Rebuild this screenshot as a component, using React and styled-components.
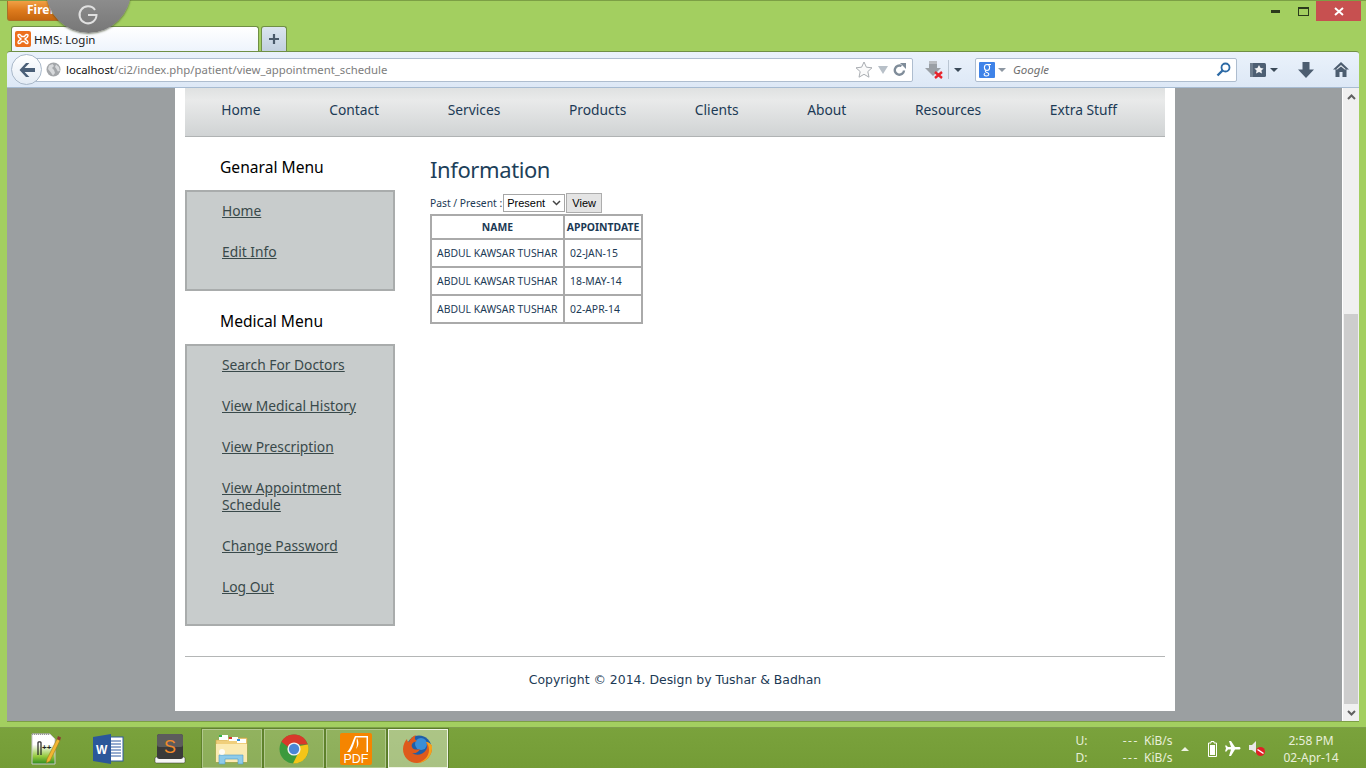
import React from "react";
import styled, { createGlobalStyle } from "styled-components";

const Global = createGlobalStyle`
  html, body { margin: 0; padding: 0; overflow: hidden; background: #a3cf60; }
  * { box-sizing: border-box; }
`;

const UI = `"Noto Sans", "Open Sans", sans-serif`;

const Screen = styled.div`
  position: relative; width: 1366px; height: 768px; overflow: hidden;
  display: flex; flex-direction: column; font-family: ${UI};
`;
const Win = styled.div`
  height: 727px; display: flex; flex-direction: column; background: #a3cf60;
  border-top: 1px solid #7c9f45; padding: 0 7px 5px 7px;
`;
const TitleRow = styled.div`
  height: 25px; flex: none; display: flex; justify-content: space-between; align-items: flex-start;
`;
const MenuButton = styled.div`
  width: 103px; height: 20px; padding-left: 19px; font: bold 12px/18px ${UI}; color: #fff;
  background: linear-gradient(#f0a045, #dd7a1c 50%, #c4650f); border: 1px solid #a8702a; border-top: 0;
  border-radius: 0 0 3px 3px;
`;
const WinControls = styled.div`display: flex; align-items: flex-start; margin-right: -2px;`;
const WinBtn = styled.div`
  width: ${p => p.$w}px; height: 20px; display: flex; align-items: center; justify-content: center;
  background: ${p => p.$bg || "transparent"};
`;
const TabRow = styled.div`
  height: 25px; flex: none; display: flex; padding-left: 4px; gap: 2px; align-items: flex-end;
`;
const Tab = styled.div`
  width: 248px; height: 25px; display: flex; align-items: center; gap: 3px; padding: 0 0 0 3px;
  background: linear-gradient(#fff, #eef4fc); border: 1px solid #6f8f45; border-bottom: 0;
  border-radius: 3px 3px 0 0; font-size: 11.5px; color: #1a1a1a;
`;
const NewTab = styled.div`
  width: 26px; height: 25px; display: flex; align-items: center; justify-content: center;
  background: linear-gradient(#dbe5ef, #c2d0df); border: 1px solid #6f8f45; border-bottom: 0;
  border-radius: 3px 3px 0 0;
`;
const Toolbar = styled.div`
  height: 37px; flex: none; display: flex; align-items: center; padding: 0 0 0 4px;
  background: linear-gradient(#eaf2fb, #dde8f6); border-top: 1px solid #6f8f45; border-bottom: 1px solid #a6bbd2;
  border-radius: 3px 3px 0 0;
`;
const BackButton = styled.div`
  position: relative; z-index: 2; flex: none; width: 31px; height: 31px; border-radius: 50%;
  background: linear-gradient(#fff, #e4ecf5); border: 1px solid #a9b8c9;
  display: flex; align-items: center; justify-content: center; margin-right: -12px;
`;
const Field = styled.div`
  display: flex; align-items: center; height: 24px; background: #fff; border: 1px solid #aebdcf; border-radius: 2px;
`;
const UrlField = styled(Field)`width: 883px; padding: 0 6px 0 15px; flex: none;`;
const Globe = styled.span`display: flex; margin-right: 5px;`;
const UrlText = styled.span`
  flex: 1; font-size: 11.35px; color: #7d7d7d; white-space: nowrap;
`;
const UrlHost = styled.b`font-weight: 400; color: #111;`;
const ToolIcons = styled.div`display: flex; align-items: center; gap: ${p => p.$gap || 5}px; margin-left: ${p => p.$ml || 0}px;`;
const SearchField = styled(Field)`width: 262px; flex: none; margin-left: 13px; padding: 0 5px 0 3px;`;
const SearchText = styled.span`flex: 1; font-size: 11.5px; font-style: italic; color: #707070; margin-left: 7px;`;
const Caret = styled.span`
  width: 0; height: 0; border-left: 4px solid transparent; border-right: 4px solid transparent;
  border-top: 4px solid ${p => p.$c || "#3b4a58"}; display: inline-block; margin-left: ${p => p.$ml || 0}px;
`;
const Sep = styled.span`width: 1px; height: 19px; background: #b9c5d2;`;
const Viewport = styled.div`flex: 1; display: flex; min-height: 0; border-bottom: 1px solid #7c9f45;`;
const Canvas = styled.div`flex: 1; background: #9b9fa1; padding-left: 168px;`;
const Page = styled.div`
  width: 1000px; height: 623px; background: #fff; padding: 0 10px; display: flex; flex-direction: column;
`;
const Nav = styled.nav`
  height: 49px; flex: none; display: flex; align-items: center; padding: 0 0 5px 2px;
  background: linear-gradient(#dfe1e1, #e9eaea 25%, #d0d3d4); border-bottom: 1px solid #b0b3b4;
`;
const NavItem = styled.a`
  padding: 0 34.3px; font-size: 13.8px; color: #1c3a55; white-space: nowrap;
`;
const Body = styled.div`flex: 1; display: flex; min-height: 0;`;
const Sidebar = styled.aside`width: 210px; flex: none;`;
const SideTitle = styled.h3`
  margin: 0; height: 53px; padding: 20px 0 0 35px; font-size: 15.6px; font-weight: 400; line-height: 20px; color: #000;
`;
const SideBox = styled.div`
  background: #c8cccc; border: 2px solid #a9acac; padding: 10px 20px 5px 35px;
`;
const SideLink = styled.a`
  display: block; margin-bottom: 24px; font-size: 13.8px; line-height: 17px; color: #39494a; text-decoration: underline;
  width: ${p => p.$w || 150}px;
`;
const Main = styled.main`flex: 1; padding: 19px 0 0 35px;`;
const Heading = styled.h1`margin: 0; height: 36px; font-size: 22px; letter-spacing: -0.4px; font-weight: 400; line-height: 27px; color: #1d3f5a;`;
const FormRow = styled.form`display: flex; align-items: center; height: 22px;`;
const FormLabel = styled.span`font-size: 10.3px; color: #1c3a55; margin-right: 1px; white-space: nowrap;`;
const FakeSelect = styled.div`
  width: 62px; height: 18px; border: 1px solid #a6a6a6; background: #fff; display: flex; align-items: center;
  justify-content: space-between; padding: 0 3px; font: 11px "Liberation Sans", sans-serif; color: #000;
`;
const ViewButton = styled.button`
  width: 36px; height: 20px; margin-left: 1px; padding: 0; border: 1px solid #adadad; background: #e4e4e4;
  font: 11px "Liberation Sans", sans-serif; color: #000;
`;
const Table = styled.table`border-collapse: collapse; width: 211px; table-layout: fixed; font-size: 10.4px; color: #1c3a55;`;
const Th = styled.th`
  border: 2px solid #aaa; height: 24px; padding: 0; font-weight: 700; text-align: center; width: ${p => p.$w}px; white-space: nowrap;
`;
const Td = styled.td`
  border: 2px solid #aaa; height: 28px; padding: 0 0 0 5px; white-space: nowrap;
`;
const FootRule = styled.div`height: 1px; background: #b4b6b6; flex: none;`;
const Footer = styled.footer`
  height: 54px; flex: none; display: flex; align-items: center; justify-content: center; padding: 0 0 10px;
  font: 12.45px "DejaVu Sans", sans-serif; color: #1c3a55;
`;
const Scrollbar = styled.div`width: 17px; flex: none; background: #f0f0f0; display: flex; flex-direction: column; border-left: 1px solid #fff;`;
const ScrollArrow = styled.div`height: 17px; flex: none; display: flex; align-items: center; justify-content: center;`;
const ScrollTrack = styled.div`flex: 1; display: flex; flex-direction: column; justify-content: flex-end; padding: 0 1px;`;
const ScrollThumb = styled.div`height: 390px; background: #cdcdcd;`;
const Taskbar = styled.div`
  height: 41px; flex: none; display: flex; align-items: stretch; padding: 1px 0 0 16px; gap: 2px;
  background: linear-gradient(#7aa23c, #749c36); color: #fff; border-top: 1px solid #7f9f4c;
`;
const TaskItem = styled.div`
  width: 60px; height: 39px; display: flex; align-items: center; justify-content: center;
  ${p => p.$open && "background: rgba(255,255,255,.18); border: 1px solid rgba(255,255,255,.3); outline: 1px solid rgba(70,100,30,.5);"}
  ${p => p.$active && "background: rgba(255,255,255,.38); border: 1px solid #eef3e3; outline: 1px solid rgba(70,100,30,.6);"}
`;
const Tray = styled.div`
  margin-left: auto; display: flex; align-items: center; font-size: 12px; line-height: 17px; color: #e8efda;
`;
const Speed = styled.div`display: grid; grid-template-columns: 40px 57px; width: 97px; margin-right: 8px; white-space: nowrap;`;
const SpeedVal = styled.span`text-align: right; word-spacing: 2px;`;
const Dashes = styled.span`letter-spacing: 1.5px;`;
const TrayCaret = styled.span`
  width: 0; height: 0; border-left: 4px solid transparent; border-right: 4px solid transparent; border-bottom: 4px solid #eef3e3;
  margin-right: 19.5px;
`;
const TrayIcons = styled.div`display: flex; align-items: center; gap: 8px; margin-right: 9px;`;
const Clock = styled.div`width: 72px; margin-right: 19px; text-align: center; white-space: nowrap;`;
const GBubble = styled.div`
  position: absolute; left: 46px; top: -52px; width: 85px; height: 85px; border-radius: 50%;
  background: linear-gradient(#a8a8a8, #8d8d8d 60%, #777); box-shadow: 0 1px 2px rgba(50,60,30,.6);
  z-index: 5;
`;
const GMark = styled.svg`position: absolute; left: 77px; top: 4px; z-index: 6;`;

const ArrowLeft = () => (
  <svg width="18" height="16" viewBox="0 0 18 16"><path d="M8 1 1.500 8 8 15h3.400L6.600 10H17V6H6.600l4.800-5z" fill="#4a5f78" /></svg>
);
const GlobeIcon = () => (
  <svg width="15" height="15" viewBox="0 0 15 15"><circle cx="7.500" cy="7.500" r="7" fill="#a3a6a9" /><path d="M3 3.500 6.500 2l1.500 2-2 2 2 2 1 3-2 2.500L4.500 10 2 7zM10 2.500l3 2.500.8 4-2 .5L10.500 7 9 5z" fill="#d7d9db" /></svg>
);
const Star = () => (
  <svg width="18" height="17" viewBox="0 0 18 17"><path d="m9 1 2.400 5.200 5.600.6-4.200 3.800 1.200 5.600L9 13.300 4 16.200l1.200-5.600L1 6.800l5.600-.6z" fill="#fafafa" stroke="#a9adb2" /></svg>
);
const DownTri = () => (
  <svg width="10" height="8" viewBox="0 0 10 8"><path d="M0 0h10L5 8z" fill="#b8c0c8" /></svg>
);
const Reload = () => (
  <svg width="13" height="13" viewBox="0 0 13 13"><path d="M11 7.500A4.600 4.600 0 1 1 8.500 3" fill="none" stroke="#7f8c99" strokeWidth="2.400" /><path d="M7 0h6v6z" fill="#7f8c99" /></svg>
);
const Addon = () => (
  <svg width="18" height="18" viewBox="0 0 18 18">
    <path d="M4 0h8v7h4L8 15 0 7h4z" fill="#9aa0a6" /><path d="M4 0h8v3H4z" fill="#b9bdc2" />
    <path d="m10 11 7 6M17 11l-7 6" stroke="#e8242c" strokeWidth="2.400" />
  </svg>
);
const GoogleBadge = () => (
  <svg width="16" height="16" viewBox="0 0 16 16"><rect width="16" height="16" rx="1" fill="#3f83e8" />
    <ellipse cx="8" cy="5.500" rx="2.600" ry="3" fill="none" stroke="#fff" strokeWidth="1.100" />
    <path d="M8 2.500h4M7 8.500c-1.500 1 0 1.800 1.500 2.300 2 .7 1.800 3-1 3.200-2.300.1-3.300-1.700-1.400-2.800" fill="none" stroke="#fff" strokeWidth="1.100" />
  </svg>
);
const Magnifier = () => (
  <svg width="15" height="15" viewBox="0 0 15 15"><circle cx="9.500" cy="5.500" r="4" fill="none" stroke="#2c6aa5" strokeWidth="1.800" /><path d="M6.500 8.500 1.500 13.500" stroke="#2c6aa5" strokeWidth="2.400" /></svg>
);
const BookmarkIcon = () => (
  <svg width="16" height="14" viewBox="0 0 16 14"><rect width="16" height="14" rx="1.500" fill="#4d5f73" /><rect x="0" width="3" height="14" fill="#6c7c8d" /><path d="m9 2 1.600 3 3 .4-2.200 2.100.6 3L9 9l-3 1.500.6-3-2.200-2.100 3-.4z" fill="#f2f4f6" /></svg>
);
const DownArrow = () => (
  <svg width="16" height="16" viewBox="0 0 16 16"><path d="M4.500 0h7v7.500H16L8 16 0 7.500h4.500z" fill="#4c5d70" /></svg>
);
const HomeIcon = () => (
  <svg width="16" height="15" viewBox="0 0 16 15"><path d="M8 0 0 7.500h2.500V15h4v-5h3v5h4V7.500H16z" fill="#4c5d70" /><path d="M8 3 3 7.600h1.200L8 4.500l3.800 3.100H13z" fill="#eef3f8" /></svg>
);
const Xampp = () => (
  <svg width="16" height="16" viewBox="0 0 16 16"><rect width="16" height="16" rx="2" fill="#ec6e1c" /><path d="M3 4.500C3 3 5.500 3 6.500 5.500h3C10.500 3 13 3 13 4.500c0 2-2 2.500-3 3.500 1 1 3 1.500 3 3.500 0 1.500-2.500 1.500-3.500-1h-3C5.500 13 3 13 3 11.500 3 9.500 5 9 6 8 5 7 3 6.500 3 4.500z" fill="none" stroke="#fff" strokeWidth="1.400" /></svg>
);
const NotepadIcon = () => (
  <svg width="32" height="32" viewBox="0 0 32 32">
    <defs><linearGradient id="np" x1="0" x2="0" y1="0" y2="1"><stop offset=".35" stopColor="#fff" /><stop offset=".75" stopColor="#93c83c" /><stop offset="1" stopColor="#2d8a1e" /></linearGradient></defs>
    <path d="M2 1h18l5 5v25H2z" fill="url(#np)" stroke="#c8c8c8" />
    <path d="M2 1h18" stroke="#999" strokeDasharray="1 1" strokeWidth="2" />
    <path d="M8 22V9.500c0-1 3-1 3 0V22" fill="none" stroke="#222" strokeWidth="1.200" />
    <text x="12" y="17" fontSize="8" fontWeight="700" fill="#222" fontFamily="Liberation Sans">++</text>
    <path d="M17 26 27 6l3 1.500L20 28l-3.500 2z" fill="#f2b632" stroke="#9a7a1c" strokeWidth=".6" />
    <path d="m27 6 1-3 3 1.500-1 3z" fill="#8d3b32" />
  </svg>
);
const WordIcon = () => (
  <svg width="32" height="32" viewBox="0 0 32 32">
    <rect x="14" y="4" width="17" height="24" fill="#fff" stroke="#2f5aa2" />
    <path d="M18 8h11M18 11h11M18 14h11M18 17h11M18 20h11M18 23h11" stroke="#2f5aa2" />
    <path d="M1 4 19 1v30L1 28z" fill="#2b579a" />
    <text x="4" y="20.500" fontSize="12" fontWeight="700" fill="#fff" fontFamily="Liberation Sans">W</text>
  </svg>
);
const SublimeIcon = () => (
  <svg width="32" height="32" viewBox="0 0 32 32">
    <rect x="1" y="24" width="30" height="6" rx="1.500" fill="#f6f6f6" stroke="#333" strokeWidth=".5" />
    <rect x="3" y="1" width="26" height="25" rx="2.500" fill="#3a3a3a" />
    <rect x="3" y="1" width="26" height="13" rx="2.500" fill="#5c5c5c" />
    <text x="16" y="19.500" textAnchor="middle" fontSize="18" fill="#f08a2c" fontFamily="Liberation Sans">S</text>
  </svg>
);
const FolderIcon = () => (
  <svg width="34" height="32" viewBox="0 0 34 32">
    <path d="M1 7h11l2-2h18v24H1z" fill="#f0cf7c" stroke="#cfa44a" strokeWidth=".6" />
    <rect x="4" y="2" width="9" height="5" fill="#fff" /><rect x="4" y="2" width="3" height="2" fill="#37b34a" />
    <rect x="14" y="4" width="9" height="4" fill="#fff" /><rect x="14" y="4" width="3" height="2" fill="#d8372c" />
    <rect x="22" y="6" width="9" height="4" fill="#fff" /><rect x="22" y="6" width="3" height="2" fill="#2f8fd8" />
    <path d="M1 11h31v18H1z" fill="#fbeab2" />
    <path d="M4 31V22h24v9h-5v-5H10v5z" fill="#8ecbea" stroke="#4f9ac8" strokeWidth=".6" />
    <circle cx="7" cy="19" r="3" fill="#fff" opacity=".85" />
  </svg>
);
const ChromeIcon = () => (
  <svg width="32" height="32" viewBox="0 0 32 32">
    <circle cx="16" cy="16" r="14.500" fill="#3b9a3c" />
    <path d="M3.400 8.800A14.500 14.500 0 0 1 29.800 11.500H16A5 5 0 0 0 10.800 14.500z" fill="#d8392b" />
    <path d="M29.800 11.500A14.500 14.500 0 0 1 15 30.500L21 18.500 21 13z" fill="#f4c518" />
    <circle cx="16" cy="16" r="6.600" fill="#f3f3f3" />
    <circle cx="16" cy="16" r="5.200" fill="#4a86d6" />
  </svg>
);
const PdfIcon = () => (
  <svg width="32" height="32" viewBox="0 0 32 32">
    <rect width="32" height="32" rx="2" fill="#f58500" />
    <path d="M7 19C11 15 12 9 15 3h13v16h-1.500V4.500H16C14 10 13 15 10 19z" fill="#fff" />
    <path d="M17 5c-1 4 1 6-1 11 3-3 3-7 1-11z" fill="#fff" />
    <text x="16" y="29.500" textAnchor="middle" fontSize="12.500" fill="#fff" fontFamily="Liberation Sans">PDF</text>
  </svg>
);
const FirefoxIcon = () => (
  <svg width="32" height="32" viewBox="0 0 32 32">
    <circle cx="17" cy="15" r="12.500" fill="#1f5ea8" />
    <circle cx="19" cy="11" r="6" fill="#3a8ed6" />
    <path d="M30 13c1 9-6 17-15 17C7 30 1 24 1 16c0-4 2-8 4-10 0 2 1 3 2 3 1-3 4-6 7-7-2 3-1 5 1 6-4 1-6 3-5 6 1 3 5 3 8 2-1 3-5 5-8 4 4 3 11 2 14-3 2-3 1-6 0-8z" fill="#de5a1c" />
    <path d="M30 13c1 9-6 17-15 17 6-1 12-6 12-13 0-3-1-6-3-8 3 0 5 2 6 4z" fill="#f7a21b" />
  </svg>
);
const Battery = () => (
  <svg width="9" height="16" viewBox="0 0 9 16"><path d="M3 .5h3v1.500h2.500v13.500h-8V2H3z" fill="none" stroke="#fff" /><rect x="2" y="4" width="5" height="10" fill="#fff" /></svg>
);
const Plane = () => (
  <svg width="16" height="15" viewBox="0 0 16 15"><path d="M4 0h2l4 6h4c2 0 2 2.500 0 2.500h-4l-4 6.500H4l2-6.500H3l-1.500 2H0l1-3.200L0 4.500h1.500L3 6h3z" fill="#fff" /></svg>
);
const Mute = () => (
  <svg width="17" height="16" viewBox="0 0 17 16"><path d="M0 4h3l4-4v12L3 9H0z" fill="#e8e8e8" /><circle cx="11.500" cy="10.500" r="4.500" fill="#e01f26" /><path d="m8.500 8.500 6 4" stroke="#fff" strokeWidth="1.500" /></svg>
);

const navItems = ["Home", "Contact", "Services", "Products", "Clients", "About", "Resources", "Extra Stuff"];
const general = ["Home", "Edit Info"];
const medical = ["Search For Doctors", "View Medical History", "View Prescription", "View Appointment Schedule", "Change Password", "Log Out"];
const rows = [
  ["ABDUL KAWSAR TUSHAR", "02-JAN-15"],
  ["ABDUL KAWSAR TUSHAR", "18-MAY-14"],
  ["ABDUL KAWSAR TUSHAR", "02-APR-14"],
];

export default function App() {
  return (
    <Screen>
      <Global />
      <Win>
        <TitleRow>
          <MenuButton>Firefox</MenuButton>
          <WinControls>
            <WinBtn $w={29}><svg width="9" height="3"><rect width="9" height="3" fill="#2b3a1c" /></svg></WinBtn>
            <WinBtn $w={26}><svg width="11" height="9"><rect x=".5" y="1" width="10" height="7.500" fill="none" stroke="#2b3a1c" /><rect width="11" height="2" fill="#2b3a1c" /></svg></WinBtn>
            <WinBtn $w={45} $bg="#c75050"><svg width="10" height="9"><path d="m1 1 8 7M9 1 1 8" stroke="#fff" strokeWidth="2" /></svg></WinBtn>
          </WinControls>
        </TitleRow>
        <TabRow>
          <Tab><Xampp />HMS: Login</Tab>
          <NewTab><svg width="12" height="12"><path d="M6 1v10M1 6h10" stroke="#4a5a6a" strokeWidth="2.200" /></svg></NewTab>
        </TabRow>
        <Toolbar>
          <BackButton><ArrowLeft /></BackButton>
          <UrlField>
            <Globe><GlobeIcon /></Globe>
            <UrlText><UrlHost>localhost</UrlHost>/ci2/index.php/patient/view_appointment_schedule</UrlText>
            <ToolIcons $gap={5}><Star /><DownTri /><Reload /></ToolIcons>
          </UrlField>
          <ToolIcons $ml={12} $gap={5}><Addon /><Sep /><Caret /></ToolIcons>
          <SearchField>
            <GoogleBadge />
            <Caret $c="#8d97a2" $ml={3} />
            <SearchText>Google</SearchText>
            <Magnifier />
          </SearchField>
          <ToolIcons $ml={13} $gap={4}><BookmarkIcon /><Caret /></ToolIcons>
          <ToolIcons $ml={20} $gap={19}><DownArrow /><HomeIcon /></ToolIcons>
        </Toolbar>
        <Viewport>
          <Canvas>
            <Page>
              <Nav>
                {navItems.map(n => <NavItem key={n}>{n}</NavItem>)}
              </Nav>
              <Body>
                <Sidebar>
                  <SideTitle>Genaral Menu</SideTitle>
                  <SideBox>
                    {general.map(g => <SideLink key={g}>{g}</SideLink>)}
                  </SideBox>
                  <SideTitle>Medical Menu</SideTitle>
                  <SideBox>
                    {medical.map(g => <SideLink key={g} $w={g.startsWith("View App") ? 130 : 160}>{g}</SideLink>)}
                  </SideBox>
                </Sidebar>
                <Main>
                  <Heading>Information</Heading>
                  <FormRow>
                    <FormLabel>Past / Present :</FormLabel>
                    <FakeSelect>Present <svg width="9" height="6"><path d="m1 1 3.500 3.500L8 1" fill="none" stroke="#444" strokeWidth="1.500" /></svg></FakeSelect>
                    <ViewButton type="button">View</ViewButton>
                  </FormRow>
                  <Table>
                    <thead><tr><Th $w={133}>NAME</Th><Th $w={78}>APPOINTDATE</Th></tr></thead>
                    <tbody>{rows.map(r => <tr key={r[1]}><Td>{r[0]}</Td><Td>{r[1]}</Td></tr>)}</tbody>
                  </Table>
                </Main>
              </Body>
              <FootRule />
              <Footer>Copyright © 2014. Design by Tushar &amp; Badhan</Footer>
            </Page>
          </Canvas>
          <Scrollbar>
            <ScrollArrow><svg width="9" height="6"><path d="m1 5 3.500-3.500L8 5" fill="none" stroke="#606060" strokeWidth="2" /></svg></ScrollArrow>
            <ScrollTrack><ScrollThumb /></ScrollTrack>
            <ScrollArrow><svg width="9" height="6"><path d="m1 1 3.500 3.500L8 1" fill="none" stroke="#606060" strokeWidth="2" /></svg></ScrollArrow>
          </Scrollbar>
        </Viewport>
      </Win>
      <Taskbar>
        <TaskItem><NotepadIcon /></TaskItem>
        <TaskItem><WordIcon /></TaskItem>
        <TaskItem><SublimeIcon /></TaskItem>
        <TaskItem $open><FolderIcon /></TaskItem>
        <TaskItem $open><ChromeIcon /></TaskItem>
        <TaskItem $open><PdfIcon /></TaskItem>
        <TaskItem $active><FirefoxIcon /></TaskItem>
        <Tray>
          <Speed>
            <span>U:</span><SpeedVal><Dashes>---</Dashes> KiB/s</SpeedVal>
            <span>D:</span><SpeedVal><Dashes>---</Dashes> KiB/s</SpeedVal>
          </Speed>
          <TrayCaret />
          <TrayIcons><Battery /><Plane /><Mute /></TrayIcons>
          <Clock>2:58 PM<br />02-Apr-14</Clock>
        </Tray>
      </Taskbar>
      <GBubble />
      <GMark width="22" height="22" viewBox="0 0 22 22"><path d="M18 6A8.500 8.500 0 1 0 19.500 11H11" fill="none" stroke="#e0e0e0" strokeWidth="2" /></GMark>
    </Screen>
  );
}
